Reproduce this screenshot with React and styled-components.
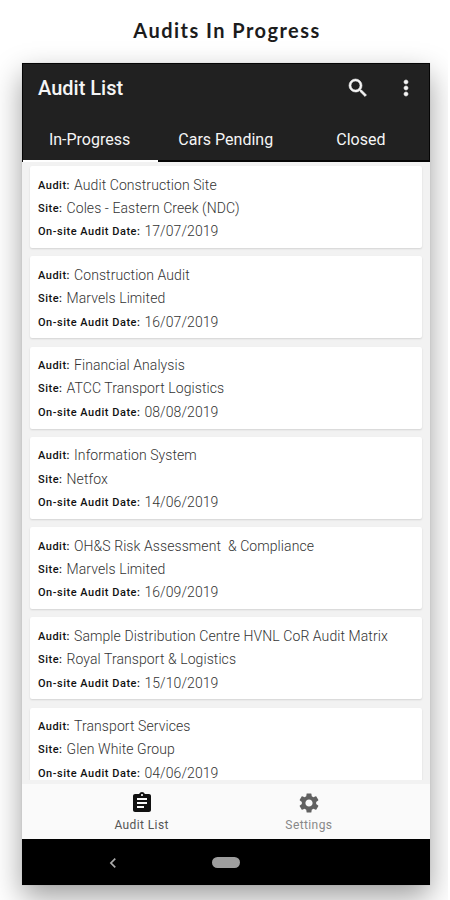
import React from 'react';
import styled, { createGlobalStyle } from 'styled-components';
import { MdSearch, MdMoreVert, MdAssignment, MdSettings, MdChevronLeft } from 'react-icons/md';

const GlobalStyle = createGlobalStyle`
  * {
    box-sizing: border-box;
  }

  body {
    margin: 0;
    background: #fff;
    font-family: Roboto, "Liberation Sans", sans-serif;
  }
`;

const Page = styled.main`
  width: 448px;
  height: 900px;
  padding-left: 22px;
  overflow: hidden;
`;

const Heading = styled.h1`
  height: 63px;
  margin: 0 0 0 -22px;
  padding: 18px 0 0 6px;
  text-align: center;
  font: 700 20px/25px Lato, sans-serif;
  letter-spacing: 1.45px;
  color: #1c1c1c;
`;

const Phone = styled.section`
  width: 407.5px;
  height: 821.5px;
  display: flex;
  flex-direction: column;
  background: #f2f2f2;
  box-shadow: 0 0 1px rgba(0, 0, 0, .15), 0 12px 28px rgba(0, 0, 0, .38);
`;

const Header = styled.header`
  height: 99px;
  flex: none;
  background: #212121;
  border: 1px solid #050505;
  border-bottom: none;
  color: #f5f5f5;
`;

const Toolbar = styled.div`
  height: 47px;
  padding: 0 11px 0 15px;
  display: flex;
  align-items: center;
`;

const Title = styled.h2`
  flex: 1;
  margin: 0;
  font-size: 20px;
  font-weight: 500;
`;

const IconButton = styled.button`
  width: 24px;
  height: 24px;
  margin-left: 24px;
  padding: 0;
  display: flex;
  justify-content: center;
  align-items: center;
  background: none;
  border: none;
  color: inherit;

  path:last-child {
    stroke: currentColor;
    stroke-width: .6px;
  }
`;

const Tabs = styled.nav`
  height: 51px;
  display: grid;
  grid-template-columns: repeat(3, 1fr);
`;

const Tab = styled.button`
  padding: ${props => props.$active ? "9px 2px 0 0" : "9px 0 0"};
  background: none;
  border: none;
  border-bottom: 2px solid ${props => props.$active ? "#fff" : "#050505"};
  font: 400 16px/20px Roboto, sans-serif;
  color: #f5f5f5;
`;

const List = styled.div`
  flex: 1;
  min-height: 0;
  margin-bottom: 4px;
  padding: 4px 8px 0;
  overflow: hidden;
`;

const Card = styled.article`
  height: 82px;
  margin-bottom: 8.25px;
  padding: 7.5px 8px 0;
  background: #fff;
  border-radius: 2px;
  box-shadow: 0 1px 2px rgba(0, 0, 0, .13);
`;

const Line = styled.p`
  margin: 0;
  height: 23.4px;
  line-height: 22px;
  font-size: 14px;
  font-weight: 300;
  letter-spacing: .08px;
  white-space: pre;
  color: #333;
`;

const Label = styled.span`
  margin-right: 4px;
  font-size: 11px;
  line-height: 1;
  font-weight: 500;
  letter-spacing: .52px;
  vertical-align: 1px;
  color: #111;
`;

const BottomNav = styled.nav`
  height: 55px;
  flex: none;
  padding: 0 37px 0 36px;
  display: flex;
  background: #fafafa;
`;

const NavItem = styled.button`
  flex: 1 1 0;
  padding: 7px 0 0;
  display: flex;
  flex-direction: column;
  align-items: center;
  background: none;
  border: none;
  font: 400 12px/16px Roboto, sans-serif;
  letter-spacing: .4px;
  color: ${props => props.$active ? "#555" : "#888"};

  svg {
    margin-bottom: 2px;
    color: ${props => props.$active ? "#111" : "#616161"};
  }
`;

const SystemBar = styled.footer`
  height: 45.5px;
  flex: none;
  padding: 2px 0 0 81px;
  display: flex;
  align-items: center;
  gap: 88.5px;
  background: #000;
  color: #aaa;
`;

const HomePill = styled.span`
  width: 28px;
  height: 11px;
  border-radius: 6px;
  background: #9e9e9e;
`;

const audits = [
    { name: "Audit Construction Site", site: "Coles - Eastern Creek (NDC)", date: "17/07/2019" },
    { name: "Construction Audit", site: "Marvels Limited", date: "16/07/2019" },
    { name: "Financial Analysis", site: "ATCC Transport Logistics", date: "08/08/2019" },
    { name: "Information System", site: "Netfox", date: "14/06/2019" },
    { name: "OH&S Risk Assessment  & Compliance", site: "Marvels Limited", date: "16/09/2019" },
    { name: "Sample Distribution Centre HVNL CoR Audit Matrix", site: "Royal Transport & Logistics", date: "15/10/2019" },
    { name: "Transport Services", site: "Glen White Group", date: "04/06/2019" },
];

const AuditCard = ({ audit }) => (
    <Card>
        <Line><Label>Audit:</Label>{audit.name}</Line>
        <Line><Label>Site:</Label>{audit.site}</Line>
        <Line><Label>On-site Audit Date:</Label>{audit.date}</Line>
    </Card>
);

const App = () => {
    return (
        <Page>
            <GlobalStyle />
            <Heading>Audits In Progress</Heading>
            <Phone>
                <Header>
                    <Toolbar>
                        <Title>Audit List</Title>
                        <IconButton aria-label="Search"><MdSearch size={24} /></IconButton>
                        <IconButton aria-label="More"><MdMoreVert size={24} /></IconButton>
                    </Toolbar>
                    <Tabs>
                        <Tab $active>In-Progress</Tab>
                        <Tab>Cars Pending</Tab>
                        <Tab>Closed</Tab>
                    </Tabs>
                </Header>
                <List>
                    {audits.map(audit => <AuditCard key={audit.name} audit={audit} />)}
                </List>
                <BottomNav>
                    <NavItem $active><MdAssignment size={24} />Audit List</NavItem>
                    <NavItem><MdSettings size={24} />Settings</NavItem>
                </BottomNav>
                <SystemBar>
                    <MdChevronLeft size={20} />
                    <HomePill />
                </SystemBar>
            </Phone>
        </Page>
    );
};

export default App;
